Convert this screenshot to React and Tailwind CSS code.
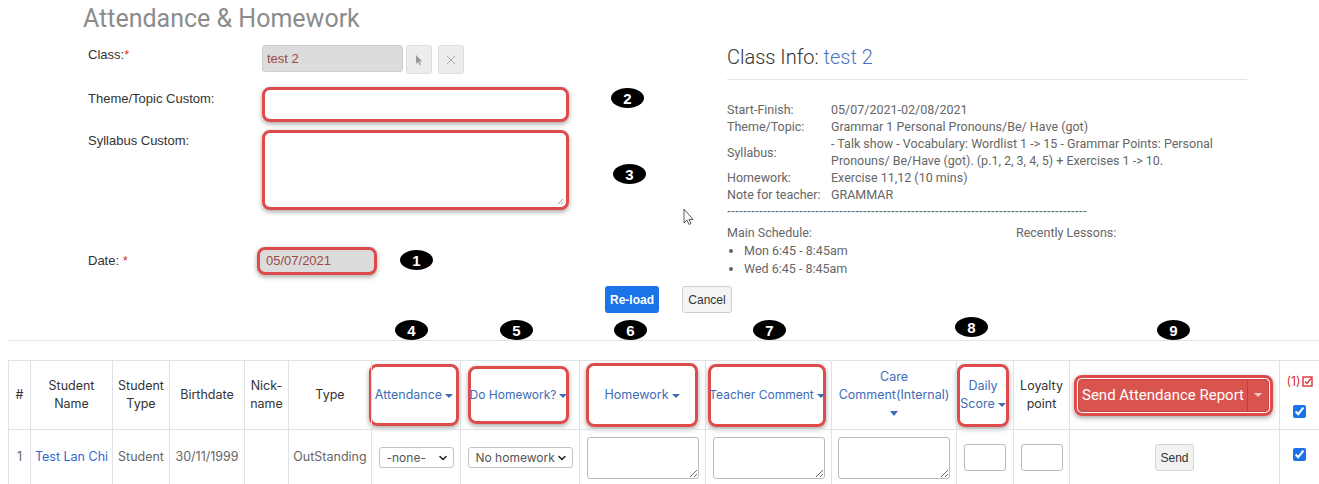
import { X, ChevronDown } from "lucide-react";

const redBox =
  "border-[3px] border-[#de4b4b] rounded-[8px] shadow-[0_2px_5px_rgba(0,0,0,0.35)]";

function Badge({ n, className }) {
  return (
    <div
      className={`absolute flex h-[20px] w-[33px] items-center justify-center rounded-[50%] bg-black font-['Liberation_Sans',sans-serif] text-[15px] font-bold leading-none text-white ${className}`}
    >
      {n}
    </div>
  );
}

function Caret() {
  return (
    <span className="ml-[3px] inline-block h-0 w-0 border-x-[4px] border-t-[4px] border-x-transparent border-t-[#3d6cb5] align-middle" />
  );
}

function FakeSelect({ label, className }) {
  return (
    <div
      className={`mx-auto flex h-[21px] items-center justify-between whitespace-nowrap rounded-[3px] border border-[#c4c4c4] bg-white pl-[7px] pr-[4px] text-[12px] text-[#555] ${className}`}
    >
      <span>{label}</span>
      <ChevronDown className="h-[12px] w-[12px] shrink-0 text-[#222]" strokeWidth={3} />
    </div>
  );
}

function InfoRow({ label, children, center }) {
  return (
    <div className={`grid grid-cols-[104px_1fr] ${center ? "items-center" : ""}`}>
      <span>{label}</span>
      <span>{children}</span>
    </div>
  );
}

export default function App() {
  const th =
    "border border-[#dee2e6] p-0 text-center align-middle text-[12.5px] font-normal leading-[18px] text-[#333]";
  const thBlue =
    "border border-[#dee2e6] p-0 text-center align-middle text-[12.5px] font-normal leading-[18px] text-[#3d6cb5]";
  const td =
    "h-[56px] border border-[#dee2e6] p-0 text-center align-middle text-[12.5px] text-[#666]";

  return (
    <div className="relative h-[484px] w-[1319px] overflow-hidden bg-white font-['Liberation_Sans',sans-serif]">
      {/* top area */}
      <div className="flex h-[286px]">
        {/* left form */}
        <div className="w-[712px] shrink-0">
          <h1 className="ml-[83px] mt-[5px] font-['Roboto',sans-serif] text-[25px] leading-[28px] text-[#8c8c8c]">
            Attendance &amp; Homework
          </h1>

          <div className="ml-[88px] mt-[12px] text-[13px] leading-[18px] text-[#333]">
            <div className="flex items-start">
              <div className="w-[174px] pt-[1px]">
                Class:<span className="text-[#d33]">*</span>
              </div>
              <div className="flex h-[27px] w-[141px] items-center rounded-[3px] border border-[#cfcfcf] bg-[#dcdcdc] pl-[4px] text-[#9b4a4a]">
                test 2
              </div>
              <div className="ml-[3px] flex h-[29px] w-[26px] items-center justify-center rounded-[3px] border border-[#dedede] bg-[#ededed]">
                <svg width="8" height="12" viewBox="0 0 8 12">
                  <path d="M1 1 L1 10 L3.2 8 L4.8 11.2 L6 10.6 L4.5 7.5 L7.2 7.3 Z" fill="#999" />
                </svg>
              </div>
              <div className="ml-[6px] flex h-[29px] w-[26px] items-center justify-center rounded-[3px] border border-[#dedede] bg-[#ededed]">
                <X className="h-[16px] w-[16px] text-[#aaa]" strokeWidth={1.5} />
              </div>
            </div>

            <div className="mt-[13px] flex items-start">
              <div className="w-[174px] pt-[3px]">Theme/Topic Custom:</div>
              <div className={`h-[35px] w-[307px] bg-white ${redBox}`} />
            </div>

            <div className="mt-[8px] flex items-start">
              <div className="w-[174px] pt-[2px]">Syllabus Custom:</div>
              <div className={`relative h-[80px] w-[307px] bg-white ${redBox}`}>
                <svg className="absolute bottom-[2px] right-[2px]" width="7" height="7" viewBox="0 0 7 7">
                  <path d="M6 1 L1 6 M6 4 L4 6" stroke="#999" strokeWidth="1" />
                </svg>
              </div>
            </div>

            <div className="mt-[37px] flex items-center">
              <div className="w-[169px]">
                Date: <span className="text-[#d33]">*</span>
              </div>
              <div className={`flex h-[28px] w-[120px] items-center bg-[#dcdcdc] pl-[6px] text-[#9b4a4a] ${redBox}`}>
                05/07/2021
              </div>
            </div>
          </div>
        </div>

        {/* right info */}
        <div className="pl-[15px] font-['Roboto',sans-serif]">
          <h2 className="mt-[45px] text-[20px] font-light leading-[24px] text-[#333]">
            Class Info: <span className="text-[#4a72c4]">test 2</span>
          </h2>
          <div className="mt-[10px] w-[520px] border-t border-[#e3e3e3]" />
          <div className="mt-[21px] w-[520px] text-[12.5px] leading-[17px] text-[#666]">
            <InfoRow label="Start-Finish:">05/07/2021-02/08/2021</InfoRow>
            <InfoRow label="Theme/Topic:">Grammar 1 Personal Pronouns/Be/ Have (got)</InfoRow>
            <InfoRow label="Syllabus:" center>
              - Talk show - Vocabulary: Wordlist 1 -&gt; 15 - Grammar Points: Personal Pronouns/ Be/Have
              (got). (p.1, 2, 3, 4, 5) + Exercises 1 -&gt; 10.
            </InfoRow>
            <InfoRow label="Homework:">Exercise 11,12 (10 mins)</InfoRow>
            <InfoRow label="Note for teacher:">GRAMMAR</InfoRow>
            <div className="whitespace-nowrap font-['Liberation_Sans',sans-serif] text-[12px]">
              {"-".repeat(90)}
            </div>
            <div className="mt-[4px] flex">
              <div className="w-[289px]">
                <div>Main Schedule:</div>
                <ul className="mt-[1px] list-disc pl-[17px] leading-[18px]">
                  <li>Mon 6:45 - 8:45am</li>
                  <li>Wed 6:45 - 8:45am</li>
                </ul>
              </div>
              <div>Recently Lessons:</div>
            </div>
          </div>
        </div>
      </div>

      {/* buttons */}
      <div className="flex h-[27px] gap-[23px] pl-[605px] font-['Liberation_Sans',sans-serif] text-[12px]">
        <button className="h-[27px] w-[54px] rounded-[3px] bg-[#1a73e8] font-bold text-white">
          Re-load
        </button>
        <button className="h-[27px] w-[50px] rounded-[3px] border border-[#cfcfcf] bg-[#f4f4f4] text-[#333]">
          Cancel
        </button>
      </div>

      <div className="ml-[8px] mt-[27px] border-t border-[#e5e5e5]" />

      {/* table */}
      <table className="ml-[8px] mt-[19px] w-[1311px] table-fixed border-collapse font-['Inter',sans-serif]">
        <colgroup>
          <col className="w-[22px]" />
          <col className="w-[82px]" />
          <col className="w-[57px]" />
          <col className="w-[75px]" />
          <col className="w-[44px]" />
          <col className="w-[83px]" />
          <col className="w-[89px]" />
          <col className="w-[119px]" />
          <col className="w-[126px]" />
          <col className="w-[126px]" />
          <col className="w-[125px]" />
          <col className="w-[57px]" />
          <col className="w-[56px]" />
          <col className="w-[210px]" />
          <col className="w-[40px]" />
        </colgroup>
        <thead>
          <tr className="h-[69px]">
            <th className={th}>#</th>
            <th className={th}>
              Student
              <br />
              Name
            </th>
            <th className={th}>
              Student
              <br />
              Type
            </th>
            <th className={th}>Birthdate</th>
            <th className={th}>
              Nick-
              <br />
              name
            </th>
            <th className={th}>Type</th>
            <th className={thBlue}>
              <div className={`-ml-[3px] mr-[1px] flex h-[62px] items-center justify-center ${redBox}`}>
                <span className="whitespace-nowrap">
                  Attendance
                  <Caret />
                </span>
              </div>
            </th>
            <th className={thBlue}>
              <div className={`ml-[7px] mr-[10px] flex h-[58px] items-center justify-center ${redBox}`}>
                <span className="whitespace-nowrap text-[12px]">
                  Do Homework?
                  <Caret />
                </span>
              </div>
            </th>
            <th className={thBlue}>
              <div className={`ml-[6px] mr-[7px] flex h-[64px] items-center justify-center ${redBox}`}>
                <span className="whitespace-nowrap">
                  Homework
                  <Caret />
                </span>
              </div>
            </th>
            <th className={thBlue}>
              <div className={`ml-[2px] mr-[5px] flex h-[63px] items-center justify-center ${redBox}`}>
                <span className="whitespace-nowrap text-[12px]">
                  Teacher Comment
                  <Caret />
                </span>
              </div>
            </th>
            <th className={thBlue}>
              Care
              <br />
              Comment(Internal)
              <br />
              <span className="inline-block h-0 w-0 border-x-[4px] border-t-[5px] border-x-transparent border-t-[#3d6cb5] align-middle" />
            </th>
            <th className={thBlue}>
              <div className={`mr-[4px] flex h-[63px] flex-col items-center justify-center ${redBox}`}>
                <span>Daily</span>
                <span className="whitespace-nowrap">
                  Score
                  <Caret />
                </span>
              </div>
            </th>
            <th className={th}>
              Loyalty
              <br />
              point
            </th>
            <th className={th}>
              <div className={`ml-[4px] mr-[6px] p-[1px] ${redBox}`}>
                <div className="flex h-[33px] rounded-[4px] border border-[#c9403c] bg-[#d9534f] font-['Roboto',sans-serif] text-[15px] text-white">
                  <div className="flex flex-1 items-center justify-center whitespace-nowrap border-r border-[#c0403c]">
                    Send Attendance Report
                  </div>
                  <div className="flex w-[20px] items-center justify-center">
                    <span className="inline-block h-0 w-0 border-x-[4px] border-t-[4px] border-x-transparent border-t-[#f3c9c8]" />
                  </div>
                </div>
              </div>
            </th>
            <th className={th}>
              <div className="flex flex-col items-center gap-[14px]">
                <span className="flex items-center whitespace-nowrap text-[12.5px] text-[#d33]">
                  (1)
                  <svg width="11" height="11" viewBox="0 0 11 11" className="ml-[1px]">
                    <rect x="1" y="1" width="9" height="9" fill="none" stroke="#d33" strokeWidth="1.4" />
                    <path d="M3 5.5 L5 7.5 L9 2.5" fill="none" stroke="#d33" strokeWidth="1.4" />
                  </svg>
                </span>
                <input type="checkbox" defaultChecked className="h-[13px] w-[13px] accent-[#1a73e8]" />
              </div>
            </th>
          </tr>
        </thead>
        <tbody>
          <tr>
            <td className={td}>1</td>
            <td className={`${td} text-[#3366cc]`}>Test Lan Chi</td>
            <td className={td}>Student</td>
            <td className={td}>30/11/1999</td>
            <td className={td}></td>
            <td className={td}>OutStanding</td>
            <td className={td}>
              <FakeSelect label="-none-" className="w-[75px]" />
            </td>
            <td className={td}>
              <FakeSelect label="No homework" className="w-[105px]" />
            </td>
            <td className={td}>
              <textarea className="mx-auto block h-[42px] w-[112px] resize rounded-[3px] border border-[#bbb]" />
            </td>
            <td className={td}>
              <textarea className="mx-auto block h-[42px] w-[112px] resize rounded-[3px] border border-[#bbb]" />
            </td>
            <td className={td}>
              <textarea className="mx-auto block h-[42px] w-[112px] resize rounded-[3px] border border-[#bbb]" />
            </td>
            <td className={td}>
              <div className="mx-auto h-[27px] w-[42px] rounded-[3px] border border-[#bbb]" />
            </td>
            <td className={td}>
              <div className="mx-auto h-[27px] w-[42px] rounded-[3px] border border-[#bbb]" />
            </td>
            <td className={td}>
              <button className="h-[27px] w-[39px] rounded-[3px] border border-[#d5d5d5] bg-[#f2f2f2] font-['Liberation_Sans',sans-serif] text-[12px] text-[#333]">
                Send
              </button>
            </td>
            <td className={td}>
              <input type="checkbox" defaultChecked className="h-[13px] w-[13px] accent-[#1a73e8]" />
            </td>
          </tr>
        </tbody>
      </table>

      {/* annotation badges */}
      <Badge n="2" className="left-[611px] top-[88px]" />
      <Badge n="3" className="left-[613px] top-[164px]" />
      <Badge n="1" className="left-[400px] top-[250px]" />
      <Badge n="4" className="left-[395px] top-[320px]" />
      <Badge n="5" className="left-[500px] top-[320px]" />
      <Badge n="6" className="left-[614px] top-[320px]" />
      <Badge n="7" className="left-[753px] top-[320px]" />
      <Badge n="8" className="left-[955px] top-[317px]" />
      <Badge n="9" className="left-[1157px] top-[320px]" />

      {/* mouse cursor */}
      <svg className="absolute left-[683px] top-[208px]" width="11" height="18" viewBox="0 0 11 18">
        <path d="M1 1 L1 15 L4 12 L6 16.5 L8 15.5 L6 11.5 L10 11.5 Z" fill="#fff" stroke="#333" strokeWidth="0.8" />
      </svg>
    </div>
  );
}
